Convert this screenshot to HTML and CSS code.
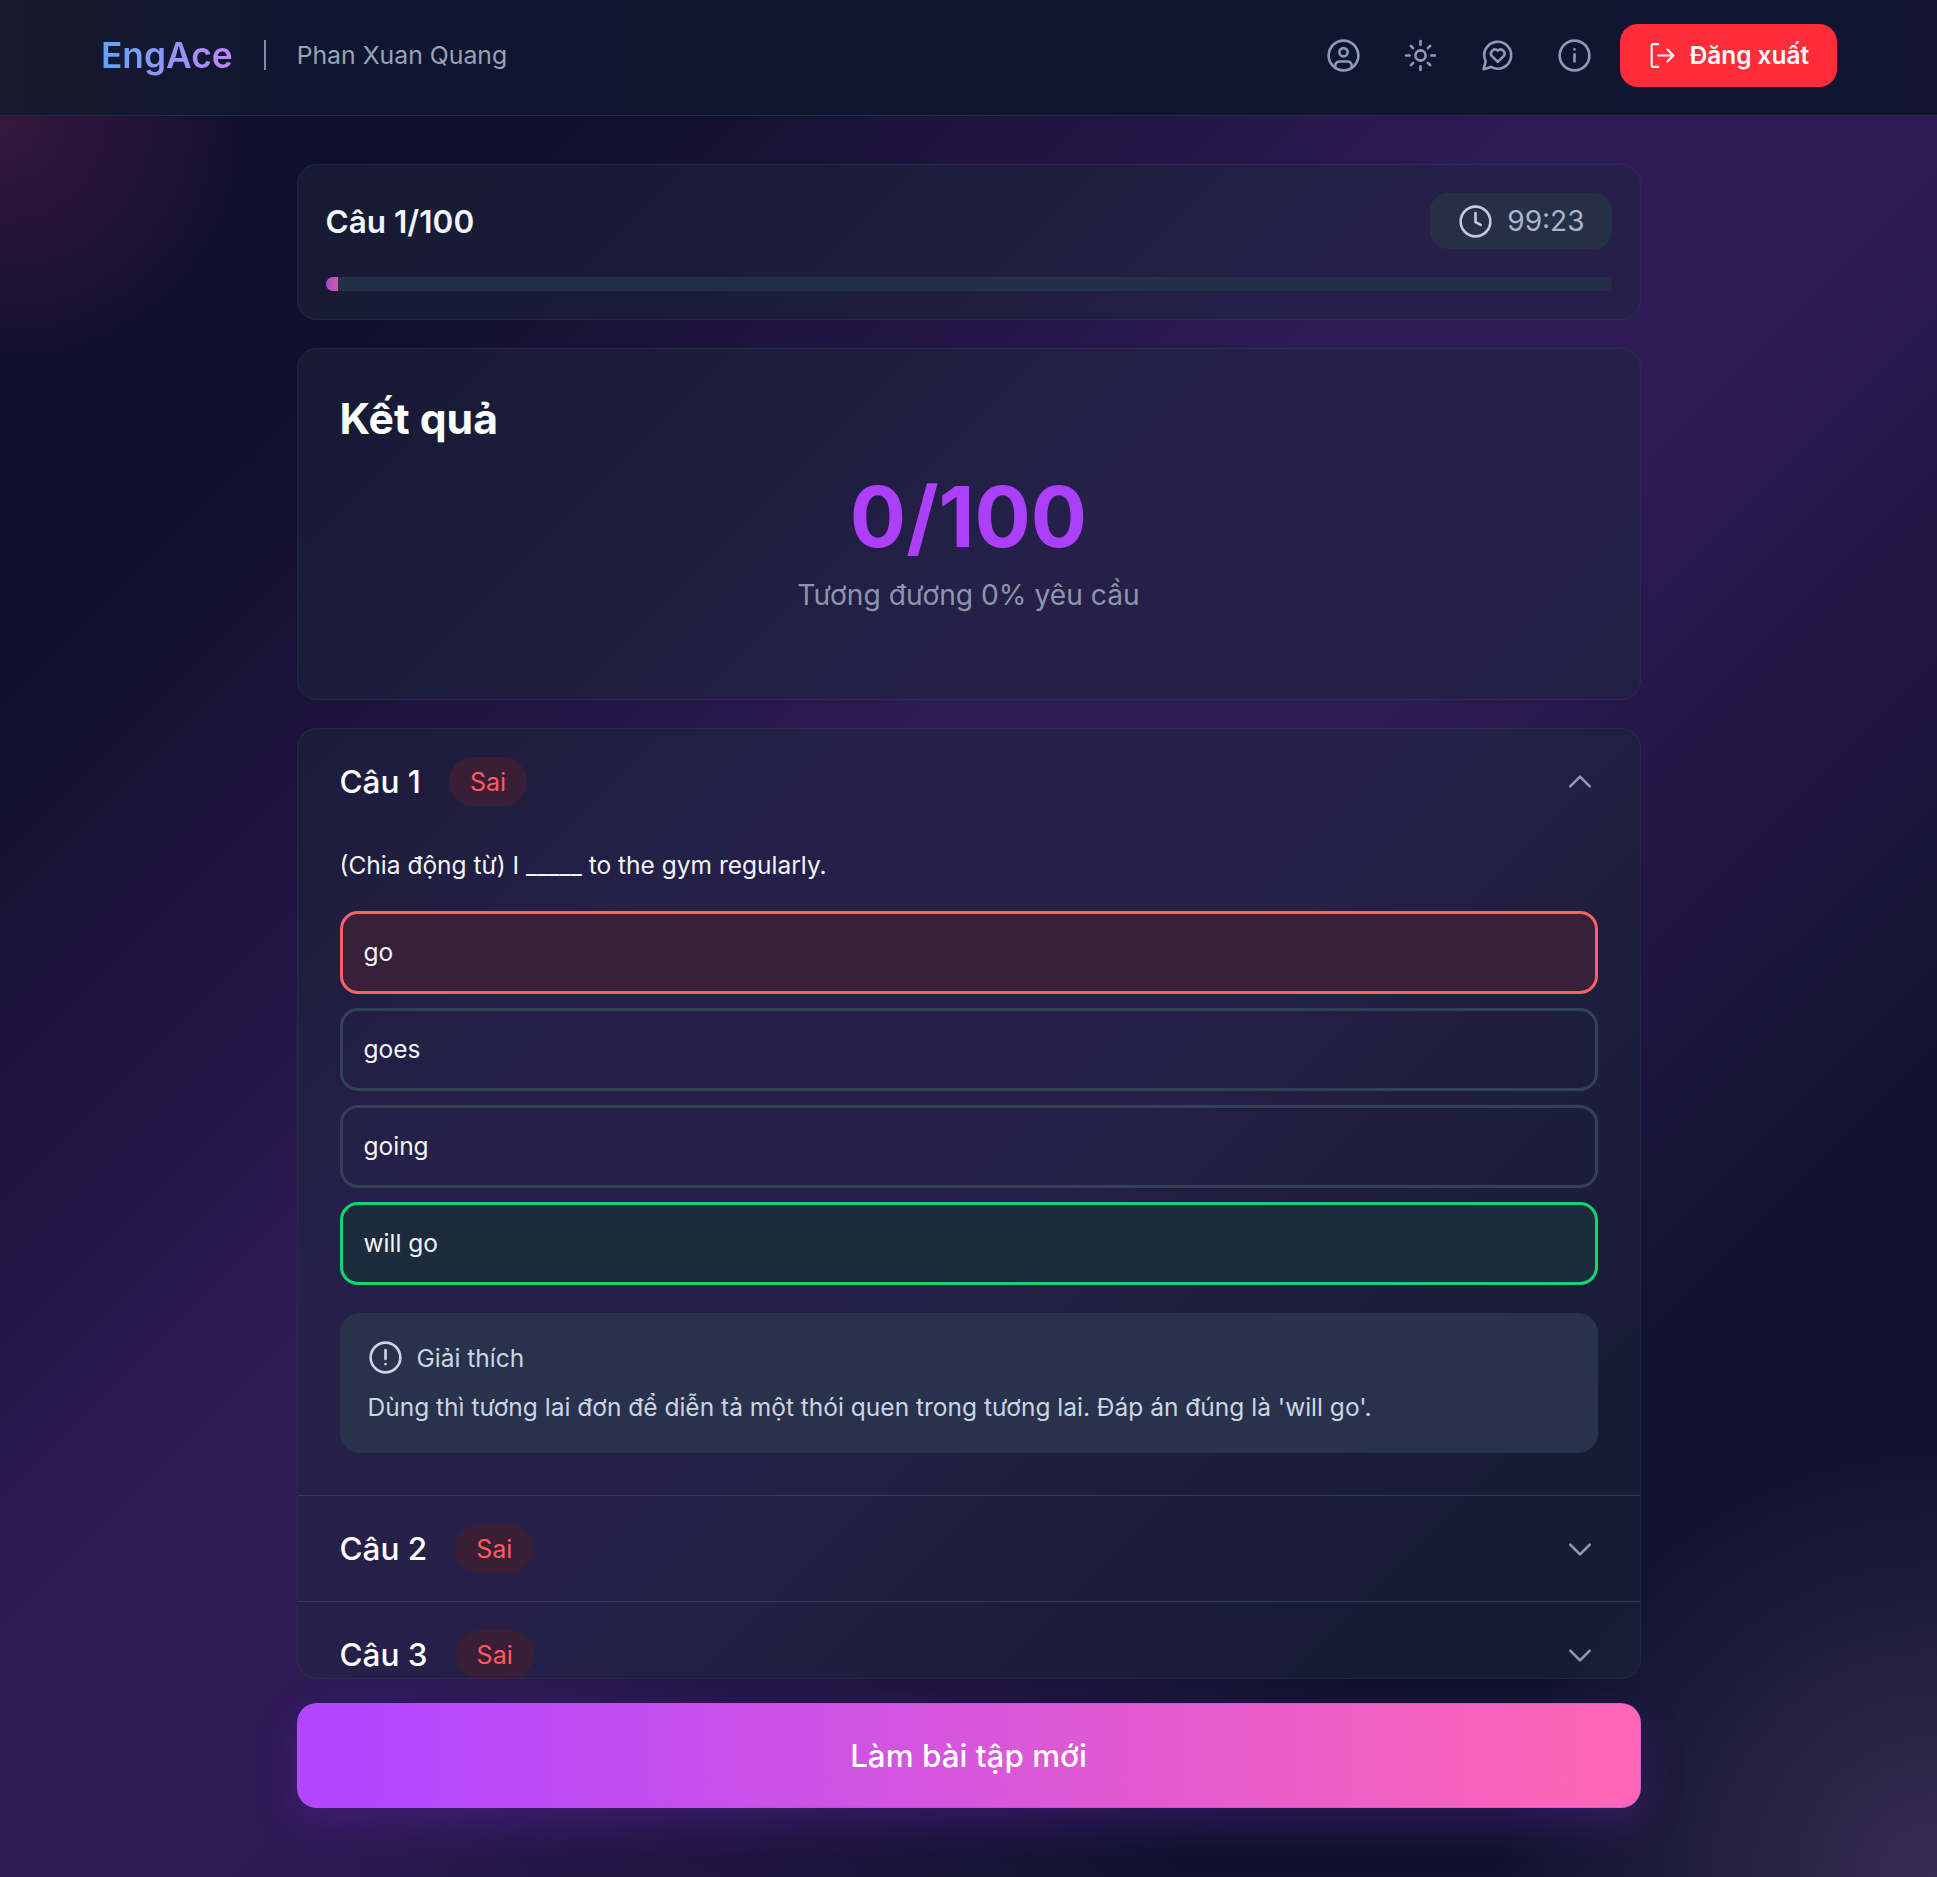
FILE: index.html
```html
<!DOCTYPE html>
<html lang="vi">
<head>
    <meta charset="UTF-8">
    <meta name="viewport" content="width=device-width, initial-scale=1.0">
    <title>EngAce</title>
    <link rel="stylesheet" href="styles.css">
</head>
<body>
    <header class="topbar">
        <div class="brand">
            <span class="logo">EngAce</span>
            <span class="brand-divider"></span>
            <span class="username">Phan Xuan Quang</span>
        </div>
        <div class="topbar-actions">
            <svg class="nav-icon" viewBox="0 0 24 24"><circle cx="12" cy="12" r="10.8"/><circle cx="12" cy="9.6" r="3"/><path d="M6.4 21a3 3 0 0 1 2.4-4.6h6.4a3 3 0 0 1 2.4 4.6"/></svg>
            <svg class="nav-icon" viewBox="0 0 24 24"><circle cx="12" cy="12" r="3.7"/><path d="M12 1.5v2.6M12 19.9v2.6M5 5l1.6 1.6M17.4 17.4L19 19M1.5 12h2.6M19.9 12h2.6M5 19l1.6-1.6M17.4 6.6L19 5"/></svg>
            <svg class="nav-icon" viewBox="0 0 24 24"><path d="M7.3 20.3A9.8 9.8 0 1 0 3.4 16.2L1.9 22Z"/><path d="M12.2 16.6l-4.6-4.5a3 3 0 0 1 4.6-3.7 3 3 0 0 1 4.6 3.7Z"/></svg>
            <svg class="nav-icon" viewBox="0 0 24 24"><circle cx="12" cy="12" r="10.8"/><path d="M12 11.2v5.2M12 7.5v.1"/></svg>
            <button class="logout-btn">
                <svg class="logout-icon" viewBox="0 0 24 24"><path d="M8.5 1.5H3.5a1 1 0 0 0-1 1v19a1 1 0 0 0 1 1h5M8.5 12H22.5M17 6.5l5.5 5.5-5.5 5.5"/></svg>
                Đăng xuất
            </button>
        </div>
    </header>

    <main class="page">
        <section class="card progress-card">
            <div class="progress-head">
                <h2 class="progress-title">Câu 1/100</h2>
                <div class="timer">
                    <svg class="timer-icon" viewBox="0 0 24 24"><circle cx="12" cy="12" r="10.8"/><path d="M12 5.8v6.7l3.8 2"/></svg>
                    <span>99:23</span>
                </div>
            </div>
            <div class="progress-track"><div class="progress-fill" style="width: 1%"></div></div>
        </section>

        <section class="card result-card">
            <h1 class="result-title">Kết quả</h1>
            <div class="score">0/100</div>
            <p class="score-note">Tương đương 0% yêu cầu</p>
        </section>

        <section class="card question-list">
            <div class="question">
                <div class="question-head">
                    <h3 class="question-name">Câu 1</h3>
                    <span class="badge">Sai</span>
                    <svg class="chevron" viewBox="0 0 24 24"><path d="M3 16l9-9 9 9"/></svg>
                </div>
                <div class="question-body">
                    <p class="question-text">(Chia động từ) I _____ to the gym regularly.</p>
                    <div class="options">
                        <div class="option wrong">go</div>
                        <div class="option">goes</div>
                        <div class="option">going</div>
                        <div class="option correct">will go</div>
                    </div>
                    <div class="explain">
                        <div class="explain-head">
                            <svg class="explain-icon" viewBox="0 0 24 24"><circle cx="12" cy="12" r="10.8"/><path d="M12 6.5v6.5M12 16.8v.1"/></svg>
                            <span>Giải thích</span>
                        </div>
                        <p class="explain-text">Dùng thì tương lai đơn để diễn tả một thói quen trong tương lai. Đáp án đúng là 'will go'.</p>
                    </div>
                </div>
            </div>
            <div class="question">
                <div class="question-head">
                    <h3 class="question-name">Câu 2</h3>
                    <span class="badge">Sai</span>
                    <svg class="chevron" viewBox="0 0 24 24"><path d="M3 8l9 9 9-9"/></svg>
                </div>
            </div>
            <div class="question">
                <div class="question-head">
                    <h3 class="question-name">Câu 3</h3>
                    <span class="badge">Sai</span>
                    <svg class="chevron" viewBox="0 0 24 24"><path d="M3 8l9 9 9-9"/></svg>
                </div>
            </div>
        </section>

        <button class="new-btn">Làm bài tập mới</button>
    </main>
</body>
</html>
```

FILE: styles.css
```css
* {
    box-sizing: border-box;
}
html, body {
    height: 100%;
}
body {
    margin: 0;
    height: 100vh;
    overflow: hidden;
    display: flex;
    flex-direction: column;
    font-family: Inter, "Noto Sans", sans-serif;
    color: #f1f5f9;
    background:
        radial-gradient(circle at 0 116px, rgba(190, 60, 120, 0.22), rgba(190, 60, 120, 0) 260px),
        radial-gradient(circle at 100% 100%, rgba(120, 90, 150, 0.36), rgba(120, 90, 150, 0) 440px),
        linear-gradient(135deg, #0e0e2c 0%, #131030 20%, #2e1a55 43%, #2e1a55 55%, #11122e 80%, #11122e 100%);
}
.topbar {
    height: 116px;
    flex: none;
    display: flex;
    justify-content: space-between;
    align-items: center;
    padding: 0 100px 5px 101px;
    background: linear-gradient(90deg, #161a30 0%, #10162f 15%, #11152f 100%);
    border-bottom: 1px solid #232b45;
}
.brand {
    display: flex;
    align-items: center;
}
.logo {
    font-size: 35.3px;
    font-weight: 600;
    background: linear-gradient(90deg, #60a5fa, #c084fc);
    -webkit-background-clip: text;
    background-clip: text;
    color: transparent;
}
.brand-divider {
    width: 2px;
    height: 30px;
    margin: 0 31px;
    background: #7f8da6;
}
.username {
    font-size: 24.8px;
    color: #94a3b8;
}
.topbar-actions {
    display: flex;
    align-items: center;
    gap: 44px;
}
.nav-icon {
    width: 33px;
    height: 33px;
    fill: none;
    stroke: #8c9ab3;
    stroke-width: 1.9;
    stroke-linecap: round;
    stroke-linejoin: round;
}
.logout-btn {
    display: flex;
    align-items: center;
    gap: 15px;
    height: 63px;
    margin-left: -15px;
    padding: 0 28px 0 29px;
    border: none;
    border-radius: 18px;
    background: #ff2d3a;
    color: #fff;
    font-family: inherit;
    font-size: 24.4px;
    font-weight: 600;
}
.logout-icon {
    width: 26px;
    height: 27px;
    fill: none;
    stroke: #fff;
    stroke-width: 1.9;
    stroke-linecap: round;
    stroke-linejoin: round;
}
.page {
    flex: 1;
    min-height: 0;
    width: 1344px;
    margin: 0 auto;
    padding: 48px 0 69px;
    display: flex;
    flex-direction: column;
}
.card {
    background: rgba(30, 41, 59, 0.44);
    border: 1px solid rgba(51, 65, 85, 0.32);
    border-radius: 20px;
}
.progress-card {
    flex: none;
    height: 156px;
    padding: 28px;
    margin-bottom: 28px;
}
.progress-head {
    display: flex;
    justify-content: space-between;
    align-items: center;
    margin-bottom: 28px;
}
.progress-title {
    margin: 0;
    font-size: 31.5px;
    font-weight: 600;
}
.timer {
    display: flex;
    align-items: center;
    gap: 15px;
    height: 56px;
    padding: 0 27px 0 29px;
    border-radius: 18px;
    background: #252f46;
    font-size: 28px;
    color: #aab5c7;
}
.timer-icon {
    width: 33px;
    height: 33px;
    fill: none;
    stroke: #c2cbd9;
    stroke-width: 1.9;
    stroke-linecap: round;
    stroke-linejoin: round;
}
.progress-track {
    height: 14px;
    border-radius: 7px;
    overflow: hidden;
    background: #232f47;
}
.progress-fill {
    height: 100%;
    background: linear-gradient(90deg, #a845d8, #cf5aa8);
}
.result-card {
    flex: none;
    height: 352px;
    padding: 45px 42px 42px;
    margin-bottom: 28px;
    text-align: center;
}
.result-title {
    margin: 0;
    text-align: left;
    font-size: 42.7px;
    line-height: 50px;
    font-weight: 700;
    color: #fff;
}
.score {
    margin-top: 23px;
    font-size: 83.5px;
    line-height: 100px;
    font-weight: 700;
    color: #ab3ffb;
}
.score-note {
    margin: 11px 0 0;
    font-size: 28.2px;
    color: #8b95ad;
}
.question-list {
    flex: 1;
    min-height: 0;
    overflow: hidden;
    margin-bottom: 24px;
}
.question + .question {
    border-top: 1px solid #323c58;
}
.question-head {
    display: flex;
    align-items: center;
    height: 105px;
    padding: 0 42px;
}
.question-name {
    margin: 0 28px 0 0;
    font-size: 31.5px;
    font-weight: 500;
    color: #fff;
}
.badge {
    height: 49px;
    padding: 0 21px;
    display: flex;
    align-items: center;
    border-radius: 25px;
    background: #3a1e35;
    color: #ff5a60;
    font-size: 25px;
}
.chevron {
    width: 26px;
    height: 26px;
    margin-left: auto;
    margin-right: 5px;
    fill: none;
    stroke: #8c9ab3;
    stroke-width: 2.4;
    stroke-linecap: round;
    stroke-linejoin: round;
}
.question-body {
    padding: 0 42px 42px;
}
.question-text {
    margin: 8px 0 23px;
    font-size: 24.5px;
    line-height: 46px;
    color: #f1f5f9;
}
.options {
    display: flex;
    flex-direction: column;
    gap: 14px;
    margin-bottom: 28px;
}
.option {
    height: 83px;
    display: flex;
    align-items: center;
    padding: 0 21px 2px;
    border: 3px solid #334155;
    border-radius: 18px;
    font-size: 24.5px;
}
.option.wrong {
    border-color: #ff5f66;
    background: #362138;
}
.option.correct {
    border-color: #0fd672;
    background: #1c2c3c;
}
.explain {
    height: 140px;
    padding: 28px;
    border-radius: 20px;
    background: #28324d;
    color: #cbd5e1;
    font-size: 24.5px;
}
.explain-head {
    display: flex;
    align-items: center;
    gap: 15px;
    margin-bottom: 18px;
    height: 33px;
}
.explain-icon {
    width: 33px;
    height: 33px;
    flex: none;
    margin-left: 1px;
    fill: none;
    stroke: #cbd5e1;
    stroke-width: 1.9;
    stroke-linecap: round;
}
.explain-text {
    margin: 0;
}
.new-btn {
    flex: none;
    height: 105px;
    padding-top: 2px;
    border: 1px solid rgba(168, 85, 247, 0.5);
    border-radius: 20px;
    background: linear-gradient(90deg, #b347ff 6%, #ff66b5 98%);
    background-origin: border-box;
    box-shadow: 0 16px 40px rgba(120, 40, 200, 0.28);
    color: #fff;
    font-family: inherit;
    font-size: 31.4px;
    font-weight: 500;
}
```
